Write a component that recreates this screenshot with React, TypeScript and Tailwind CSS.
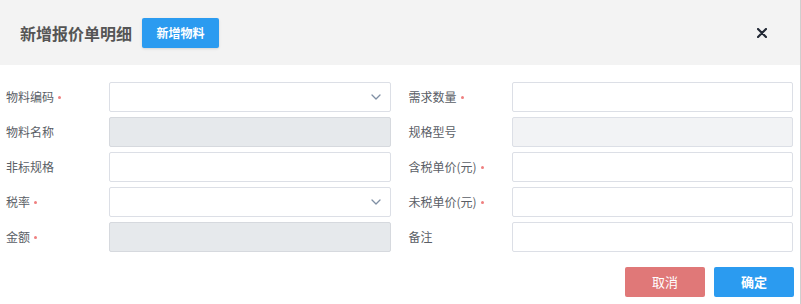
const fieldsLeft = [
  { label: "物料编码", required: true, kind: "select" },
  { label: "物料名称", required: false, kind: "disabled" },
  { label: "非标规格", required: false, kind: "text" },
  { label: "税率", required: true, kind: "select" },
  { label: "金额", required: true, kind: "disabled" },
]

const fieldsRight = [
  { label: "需求数量", required: true, kind: "text" },
  { label: "规格型号", required: false, kind: "disabledLight" },
  { label: "含税单价(元)", required: true, kind: "text" },
  { label: "未税单价(元)", required: true, kind: "text" },
  { label: "备注", required: false, kind: "text" },
]

const Chevron = () => (
  <svg width="10" height="6" viewBox="0 0 10 6" className="absolute right-[9px] top-1/2 -translate-y-1/2">
    <path d="M1 1l4 4 4-4" fill="none" stroke="#7f8fa4" strokeWidth="1.3" strokeLinecap="round" strokeLinejoin="round" />
  </svg>
)

const Field = ({ label, required, kind }: { label: string; required: boolean; kind: string }) => {
  let box = "bg-white border-[#dcdfe6]"
  if (kind === "disabled") box = "bg-[#e6e9ec] border-[#d6d9de]"
  if (kind === "disabledLight") box = "bg-[#f2f3f5] border-[#dcdfe6]"
  return (
    <div className="flex items-center h-[30px]">
      <div className="w-[103px] flex items-center text-[12px] text-[#5a5e66]">
        <span>{label}</span>
        {required && <span className="ml-[4px] w-[3px] h-[3px] rounded-full bg-[#ef7f7f]" />}
      </div>
      <div className={`relative flex-1 h-full border rounded-[2px] ${box}`}>
        {kind === "select" && <Chevron />}
      </div>
    </div>
  )
}

const App = () => {
  return (
    <div className="w-[801px] h-[304px] bg-white border-r border-[#cfcfcf] font-['Noto_Sans_CJK_SC','Noto_Sans',sans-serif]">
      <div className="h-[65px] bg-[#f3f3f3] flex items-center pl-[20px] pr-[33px]">
        <h1 className="text-[16px] font-bold text-[#555]">新增报价单明细</h1>
        <button className="ml-[10px] w-[77px] h-[30px] rounded-[2px] bg-[#2b9bf0] text-white text-[12px] font-bold shadow-sm">
          新增物料
        </button>
        <div className="flex-1" />
        <svg width="10" height="10" viewBox="0 0 10 10">
          <path d="M1 1l8 8M9 1l-8 8" stroke="#232a36" strokeWidth="2.2" strokeLinecap="round" />
        </svg>
      </div>
      <div className="grid grid-cols-2 gap-x-[18px] pl-[6px] pr-[7px] pt-[17px]">
        <div className="flex flex-col gap-[5px]">
          {fieldsLeft.map((f) => (
            <Field key={f.label} {...f} />
          ))}
        </div>
        <div className="flex flex-col gap-[5px]">
          {fieldsRight.map((f) => (
            <Field key={f.label} {...f} />
          ))}
        </div>
      </div>
      <div className="flex justify-end gap-[9px] pr-[6px] mt-[15px]">
        <button className="w-[80px] h-[30px] rounded-[2px] bg-[#e07878] text-white text-[13px]">取消</button>
        <button className="w-[80px] h-[30px] rounded-[2px] bg-[#2b9bf0] text-white text-[13px] font-bold">确定</button>
      </div>
    </div>
  )
}

export default App
